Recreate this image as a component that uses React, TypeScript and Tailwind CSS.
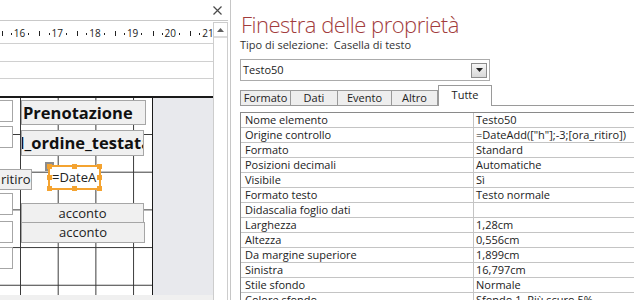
import React from 'react';

const rows: [string, string][] = [
  ['Nome elemento', 'Testo50'],
  ['Origine controllo', '=DateAdd(["h"];-3;[ora_ritiro])'],
  ['Formato', 'Standard'],
  ['Posizioni decimali', 'Automatiche'],
  ['Visibile', 'Sì'],
  ['Formato testo', 'Testo normale'],
  ['Didascalia foglio dati', ''],
  ['Larghezza', '1,28cm'],
  ['Altezza', '0,556cm'],
  ['Da margine superiore', '1,899cm'],
  ['Sinistra', '16,797cm'],
  ['Stile sfondo', 'Normale'],
  ['Colore sfondo', 'Sfondo 1, Più scuro 5%'],
];

const tabs = [
  { label: 'Formato', w: 'w-[50px] border-l' },
  { label: 'Dati', w: 'w-[47px] border-l' },
  { label: 'Evento', w: 'w-[54px] border-l' },
  { label: 'Altro', w: 'w-[47px] border-x' },
];

function Ruler() {
  const nums = [16, 17, 18, 19, 20, 21];
  return (
    <svg width="213" height="22" className="block shrink-0">
      {nums.map((n, i) => {
        const cx = 19.5 + i * 37.7;
        const half = Math.round(cx - 17.8) + 0.5;
        return (
          <g key={n} fill="#222">
            <line x1={half} x2={half} y1={10} y2={15} stroke="#222" strokeWidth={1} />
            <rect x={Math.round(cx - 8.6)} y={12} width={1} height={2} />
            <rect x={Math.round(cx + 8.6)} y={12} width={1} height={2} />
            <text x={cx} y={15.5} fontSize={10} textAnchor="middle" fontFamily="Open Sans, sans-serif">{n}</text>
          </g>
        );
      })}
    </svg>
  );
}

function Handle({ cls }: { cls: string }) {
  return <div className={`absolute w-[5px] h-[5px] bg-[#f4a330] ${cls}`} />;
}

function DesignCanvas() {
  const box = 'absolute left-[-1px] w-[14px] h-[22px] bg-white border border-[#a6a6a6]';
  const label = 'absolute bg-[#f0f0f0] border border-[#a6a6a6] overflow-hidden whitespace-nowrap';
  return (
    <div className="relative w-[153px] shrink-0 border-r border-[#1a1a1a] bg-white bg-[linear-gradient(to_right,#3a3a3a_1px,transparent_1px),linear-gradient(to_bottom,#3a3a3a_1px,transparent_1px)] bg-[length:37.7px_37.7px] bg-[position:20px_36px]">
      <div className={`${box} top-[2px]`} />
      <div className={`${box} top-[28px]`} />
      <div className={`${box} top-[95px]`} />
      <div className={`${box} top-[123px]`} />
      <div className={`${box} top-[149px]`} />

      <div className={`${label} left-[21px] top-[2px] w-[125px] h-[25px] pl-[1px] text-[16.5px] leading-[23px] font-bold text-[#111]`}>
        Prenotazione
      </div>
      <div className={`${label} left-[21px] top-[32px] w-[123px] h-[26px] text-[16.5px] leading-[24px] font-bold text-[#111]`}>
        <span className="ml-[-8px]">d_ordine_testata</span>
      </div>

      <div className={`${label} left-[-1px] top-[71px] w-[33px] h-[21px] pl-[1px] text-[13px] leading-[19px] text-[#222]`}>
        ritiro
      </div>

      <div className="absolute left-[45px] top-[64px] w-[9px] h-[9px] bg-[#8c8c8c]" />
      <div className="absolute left-[48px] top-[67px] w-[53px] h-[25px] border-2 border-[#f4a330] bg-white pl-[2px] text-[13px] leading-[21px] text-[#222] whitespace-nowrap">
        =DateA
        <Handle cls="left-[-3px] top-[-3px]" />
        <Handle cls="left-[22px] top-[-3px]" />
        <Handle cls="right-[-3px] top-[-3px]" />
        <Handle cls="left-[-3px] top-[8px]" />
        <Handle cls="right-[-3px] top-[8px]" />
        <Handle cls="left-[-3px] bottom-[-3px]" />
        <Handle cls="left-[22px] bottom-[-3px]" />
        <Handle cls="right-[-3px] bottom-[-3px]" />
      </div>

      <div className={`${label} left-[21px] top-[105px] w-[123px] h-[20px] text-center text-[13px] leading-[18px] text-[#222]`}>
        acconto
      </div>
      <div className={`${label} left-[21px] top-[124px] w-[124px] h-[21px] text-center text-[13px] leading-[19px] text-[#222]`}>
        acconto
      </div>
    </div>
  );
}

function LeftPane() {
  return (
    <div className="w-[231px] h-full shrink-0 flex flex-col border-r border-[#c6c6c6] pr-[2px] bg-white">
      <div className="h-[21px] shrink-0 border-b border-[#c9c9c9] flex items-center justify-end pr-[6px]">
        <svg width="9" height="9" viewBox="0 0 9 9">
          <path d="M0.5 0.5L8.5 8.5M8.5 0.5L0.5 8.5" stroke="#4a4a4a" strokeWidth="1.2" />
        </svg>
      </div>
      <div className="flex-1 min-h-0 flex">
        <div className="w-[213px] shrink-0 flex flex-col">
          <Ruler />
          <div className="h-[18px] shrink-0 border-t border-[#d0d0d0]" />
          <div className="h-[17px] shrink-0 border-t border-[#d0d0d0]" />
          <div className="h-[18px] shrink-0 border-t border-[#d0d0d0]" />
          <div className="flex-1 min-h-0 flex border-t-2 border-[#1a1a1a]">
            <DesignCanvas />
            <div className="flex-1 bg-[#e8e9ed]" />
          </div>
          <div className="h-[5px] shrink-0 bg-[#f0f0f0]" />
        </div>
        <div className="w-[15px] mt-[1px] border-x border-t border-[#cdcdcd] flex flex-col">
          <div className="h-[15px] border-b-2 border-[#dcdcdc] flex items-center justify-center">
            <svg width="7" height="4" viewBox="0 0 7 4">
              <path d="M0 4H7L3.5 0Z" fill="#606060" />
            </svg>
          </div>
        </div>
      </div>
    </div>
  );
}

function PropertySheet() {
  return (
    <div className="flex-1 min-w-0 h-full pl-[9px] flex flex-col overflow-hidden bg-white">
      <div className="pt-[13px] pl-[1px] text-[22px] leading-[22px] tracking-[-0.5px] font-light text-[#a23c3c] whitespace-nowrap">
        Finestra delle proprietà
      </div>
      <div className="mt-[2px] text-[11px] leading-[15px] text-[#333] whitespace-pre">
        Tipo di selezione:  Casella di testo
      </div>
      <div className="mt-[7px] w-[250px] h-[22px] shrink-0 border border-[#ababab] flex items-center justify-between pl-[2px] pr-[2px]">
        <span className="text-[11px] text-[#222]">Testo50</span>
        <div className="w-[16px] h-[15px] border border-[#8c8c8c] bg-gradient-to-b from-[#f6f6f6] to-[#d8d8d8] flex items-center justify-center">
          <svg width="7" height="4" viewBox="0 0 7 4">
            <path d="M0 0H7L3.5 4Z" fill="#222" />
          </svg>
        </div>
      </div>
      <div className="mt-[4px] h-[20px] shrink-0 flex items-end">
        {tabs.map(t => (
          <div key={t.label} className={`${t.w} h-[15px] border-t border-[#9a9a9a] bg-[#eeeeee] text-center text-[11px] leading-[14px] text-[#222]`}>
            {t.label}
          </div>
        ))}
        <div className="relative z-10 w-[54px] h-[21px] -mb-px border-x border-t border-[#9a9a9a] bg-white text-center text-[11px] leading-[15px] pt-[1px] text-[#222]">
          Tutte
        </div>
      </div>
      <div className="flex-1 border-t border-[#9a9a9a] pt-[6px]">
        <div className="border-t border-l border-[#8a8a8a]">
          {rows.map(([k, v]) => (
            <div key={k} className="flex h-[15px] border-b border-[#c4c4c4] text-[11px] leading-[14px] text-[#222] whitespace-nowrap">
              <div className="w-[233px] shrink-0 border-r border-[#c4c4c4] pl-[4px]">{k}</div>
              <div className="pl-[2px]">{v}</div>
            </div>
          ))}
        </div>
      </div>
    </div>
  );
}

export default function App() {
  return (
    <div className="w-[634px] h-[300px] overflow-hidden flex bg-white font-['Open_Sans',sans-serif]">
      <LeftPane />
      <PropertySheet />
    </div>
  );
}
